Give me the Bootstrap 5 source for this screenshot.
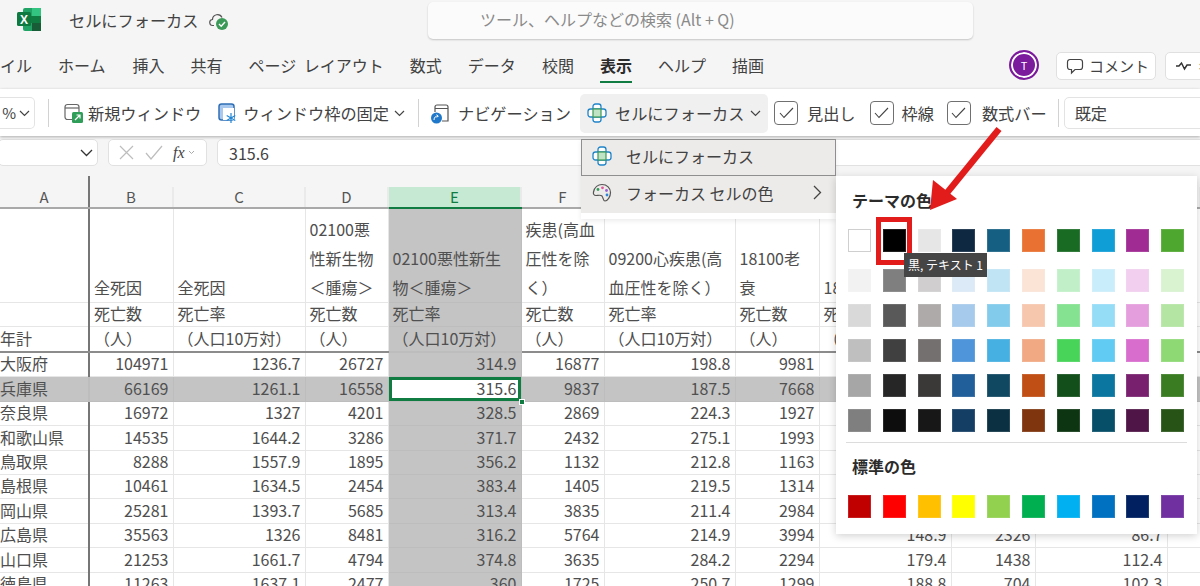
<!DOCTYPE html>
<html lang="ja">
<head>
<meta charset="utf-8">
<title>セルにフォーカス</title>
<link rel="stylesheet" href="https://cdn.jsdelivr.net/npm/bootstrap@5.3.0/dist/css/bootstrap.min.css">
<style>
html,body{margin:0;height:586px;overflow:hidden;background:#fff}
body,.xl-app{font-family:"Noto Sans CJK JP","Noto Sans",sans-serif;font-size:16px;color:#424242}
.xl-app{width:1200px;height:586px;overflow:hidden;position:relative;background:#fff}
.xl-app svg{flex:none}
.xl-title{height:44px;background:#f5f5f5;flex:none;padding-bottom:3px}
.xl-logo{margin-left:17px;margin-bottom:2px}
.xl-doc{margin-left:28px;white-space:nowrap;font-size:16.2px}
.xl-cloud{margin-left:10px}
.xl-search{margin-left:199.500px;width:545px;height:37px;background:#fbfbfb;border-radius:5px;box-shadow:0 1px 2px rgba(0,0,0,.2);padding-left:52px;color:#8a8a8a;line-height:35px;flex:none}
.xl-tabs{height:45px;background:#f5f5f5;flex:none;gap:26px;padding-bottom:3px;white-space:nowrap}
.xl-tabs .xl-tab{position:relative;line-height:42px}
.xl-first{margin-left:-32px}
.xl-home{margin-right:1px}
.xl-pl{word-spacing:4px}
.xl-tab.xl-on{font-weight:700;color:#2b2b2b}
.xl-tab.xl-on::after{content:"";position:absolute;left:0;right:0;bottom:3px;height:2px;background:#107c41}
.xl-avatar{width:30px;height:30px;border-radius:50%;background:#7b1a9c;border:2px solid #7b1a9c;box-shadow:inset 0 0 0 2px #fff;color:#fff;font-size:11px;margin-left:219px;flex:none}
.xl-topbtns{margin-left:-25px;margin-top:2px}
.xl-topbtn{height:28px;background:#fff;border:1px solid #e0e0e0;border-radius:5px;margin-left:16px;width:100px;flex:none;padding-left:9px;gap:5px;font-size:15px;overflow:hidden}
.xl-topbtn.xl-b2{margin-left:9px;width:60px}
.xl-ribbon{height:47px;background:#fff;flex:none;white-space:nowrap;box-shadow:0 1px 3px rgba(0,0,0,.3);position:relative;z-index:2;font-size:16.200px;padding-top:1px}
.xl-zoombox{width:35px;height:32px;border:1px solid #e3e3e3;border-left:0;border-radius:0 5px 5px 0;flex:none;font-size:15px;gap:3px}
.xl-sep{width:1px;height:28px;background:#d2d2d2;flex:none}
.xl-ribbon>span{flex:none}
.xl-focusbtn{width:188px;height:39px;background:#f0f0f0;border-radius:5px;margin-left:9px;padding-left:7px;flex:none}
.xl-check{width:24px;height:24px;border:1px solid #707070;border-radius:4px;flex:none}
.xl-select{width:150px;height:32px;border:1px solid #e3e3e3;border-radius:5px 0 0 5px;padding-left:10px;flex:none;margin-left:5px}
.m5{margin-left:5px}.m6{margin-left:6px}.m8{margin-left:8px}.m9{margin-left:9px}.m10{margin-left:10px}.m11{margin-left:11px}.m12{margin-left:12px}.m13{margin-left:13px}.m14{margin-left:14px}.m15{margin-left:15px}.m17{margin-left:17px}
.xl-fbar{height:36px;background:#f5f5f5;flex:none;padding-top:3px}
.xl-box{background:#fff;border:1px solid #e1e1e1;border-radius:5px;height:27px;flex:none}
.xl-namebox{width:100px;margin-left:-2px;justify-content:flex-end;padding-right:4px}
.xl-fxbox{width:99px;margin-left:10px;padding-left:9px;gap:10px}
.xl-fml{width:990px;margin-left:10px;padding-left:11px;font-size:16px}
.xl-fx{font-family:"Liberation Serif",serif;font-style:italic;font-size:16px;color:#444}
.xl-fxdrop{margin-left:-7px}
.xl-gridgap{height:15px;background:#f5f5f5;flex:none;padding-top:4px}
.xl-gridgap div{width:2px;height:11px;margin-left:88px;background:#767676}
.xl-sheet{table-layout:fixed;width:1200px;border-collapse:collapse;font-size:16px;color:#4e4e4e}
.xl-sheet th{height:21px;background:#f5f5f5;font-weight:400;text-align:center;color:#555;border-bottom:2px solid #a9a9a9;border-right:2px solid #eaeaea;padding:0;line-height:20px;font-size:15px}
.xl-sheet th.xl-acol{background:#c6e9d3;border-bottom-color:#107c41;color:#107c41}
.xl-sheet td{border-right:1px solid #e6e6e6;border-bottom:1px solid #e6e6e6;padding:0 4px 2px;white-space:nowrap;overflow:hidden;line-height:20px}
.xl-sheet .xl-frz{border-right:2px solid #767676;padding-left:0}
.xl-sheet th.xl-frz{border-right-color:#767676}
.xl-sheet td.xl-hd1{height:94px;vertical-align:bottom;white-space:normal;line-height:29px;padding-bottom:0;word-break:break-all}
.xl-sheet .xl-r2 td{height:24px}
.xl-sheet .xl-r3 td{height:26px;border-bottom:2px solid #8c8c8c}
.xl-sheet td.n{text-align:right}
.xl-sheet .xl-gray td,.xl-sheet td.xl-gray{background:#c4c4c4;color:#505050;border-color:#bdbdbd}
.xl-sheet td.xl-cur{background:#fff;box-shadow:inset 0 0 0 3px #107c41,0 0 0 1px #107c41;position:relative;z-index:1;overflow:visible;color:#4e4e4e}
.xl-sheet td.xl-cur::after{content:"";position:absolute;right:-4px;bottom:-4px;width:6px;height:6px;background:#107c41;border:1px solid #fff}
.h24 td{height:24px}.h25 td{height:25px}
.xl-menu.dropdown-menu{display:block;position:absolute;left:581px;top:139px;width:255px;padding:0 0 6px;margin:0;border:0;border-radius:0;background:#fff;font-size:16px;z-index:5;box-shadow:0 2px 5px rgba(0,0,0,.08)}
.xl-mi{height:37px;background:#edebe9;padding:0 0 4px 11px;gap:14px;color:#424242}
.xl-mi.xl-hover{border:1px solid #8f8f8f;padding-left:10px}
.xl-mi .xl-chev{margin-left:auto;margin-right:14px}
.xl-pal{position:absolute;left:836px;top:176px;width:361px;height:358px;background:#fff;z-index:6;box-shadow:0 2px 8px rgba(0,0,0,.18)}
.xl-pal h6{position:absolute;left:16px;margin:0;font-size:16px;font-weight:700;color:#2b2b2b;line-height:22px}
.xl-h1{top:13px}.xl-h2{top:279px}
.xl-swgrid{position:absolute;left:12px;display:grid;grid-template-columns:repeat(10,23px);column-gap:11.800px;row-gap:12px;grid-auto-rows:23px}
.xl-g1{top:53px}.xl-g2{top:93px}.xl-g3{top:319px}
.xl-swgrid i{display:block;box-shadow:inset 0 0 0 1px rgba(255,255,255,.12)}
.xl-swgrid .xl-swwhite{border:1px solid #cfcfcf;box-shadow:none}
.xl-divline{position:absolute;left:10px;right:10px;top:266px;height:1px;background:#dcdcdc}
.xl-redbox{position:absolute;left:40px;top:41px;width:36px;height:48px;border:5px solid #e21b1b;z-index:7}
.xl-tip{position:absolute;left:68px;top:77px;width:83px;height:24px;background:#454545;color:#fff;font-size:12px;line-height:24px;text-align:center;z-index:8;white-space:nowrap}
.xl-arrow{position:absolute;left:0;top:0;z-index:9;pointer-events:none}
</style>
</head>
<body>
<div class="xl-app d-flex flex-column">
  <div class="xl-title d-flex align-items-center">
    <svg class="xl-logo" width="24" height="23" viewBox="0 0 24 23"><rect x="6" y="0" width="18" height="23" rx="2" fill="#21a366"/><rect x="15" y="0" width="9" height="8" fill="#33c481"/><rect x="6" y="8" width="18" height="7" fill="#107c41"/><rect x="15" y="15" width="9" height="8" fill="#185c37"/><rect x="0" y="4" width="14" height="14" rx="1.5" fill="#0e7a40"/><text x="7" y="15.5" text-anchor="middle" font-size="12" font-weight="700" fill="#fff" font-family="Liberation Sans">X</text></svg>
    <span class="xl-doc">セルにフォーカス</span>
    <svg class="xl-cloud" width="20" height="20" viewBox="0 0 20 20"><path d="M5 14.5H4a3 3 0 0 1-.5-6A5 5 0 0 1 13 6.5" fill="none" stroke="#555" stroke-width="1.2"/><circle cx="13" cy="13" r="6" fill="#3c9a58"/><path d="M10 13l2.2 2.2L16 11" fill="none" stroke="#fff" stroke-width="1.4"/></svg>
    <div class="xl-search">ツール、ヘルプなどの検索 (Alt + Q)</div>
  </div>
  <div class="xl-tabs d-flex align-items-center">
    <span class="xl-tab xl-first">ファイル</span><span class="xl-tab xl-home">ホーム</span><span class="xl-tab">挿入</span><span class="xl-tab">共有</span><span class="xl-tab xl-pl">ページ レイアウト</span><span class="xl-tab">数式</span><span class="xl-tab">データ</span><span class="xl-tab">校閲</span><span class="xl-tab xl-on">表示</span><span class="xl-tab">ヘルプ</span><span class="xl-tab">描画</span>
    <div class="xl-avatar d-flex align-items-center justify-content-center">T</div>
    <div class="d-flex xl-topbtns">
      <div class="xl-topbtn d-flex align-items-center"><svg width="18" height="18" viewBox="0 0 18 18"><path d="M4 2.5h10a2.5 2.5 0 0 1 2.5 2.5v5a2.5 2.5 0 0 1-2.5 2.5H9L5.5 16v-3.5H4A2.5 2.5 0 0 1 1.500 10V5A2.500 2.500 0 0 1 4 2.500z" fill="none" stroke="#444" stroke-width="1.200"/></svg>コメント</div>
      <div class="xl-topbtn xl-b2 d-flex align-items-center"><svg width="18" height="12" viewBox="0 0 18 12"><path d="M1 6h3l2.500-3 3 6 2.500-4h4" fill="none" stroke="#333" stroke-width="1.500"/></svg>キャ</div>
    </div>
  </div>
  <div class="xl-ribbon d-flex align-items-center">
    <div class="xl-zoombox d-flex align-items-center justify-content-end pe-1">%<svg width="11" height="7" viewBox="0 0 11 7"><path d="M1 1l4.500 4.500L10 1" fill="none" stroke="#444" stroke-width="1.200"/></svg></div>
    <div class="xl-sep m13"></div>
    <svg class="m15" width="19" height="20" viewBox="0 0 19 20"><rect x="1" y="1.500" width="14" height="15" rx="2.500" fill="none" stroke="#666" stroke-width="1.200"/><path d="M1 5h14" stroke="#666" stroke-width="1.200"/><rect x="8" y="9" width="11" height="11" rx="1.500" fill="#2f9e58"/><path d="M11 17l5-5m-3.500 0H16v3.500" fill="none" stroke="#fff" stroke-width="1.200"/></svg>
    <span class="m5">新規ウィンドウ</span>
    <svg class="m17" width="19" height="21" viewBox="0 0 19 21"><rect x="1" y="1" width="15" height="16" rx="2.500" fill="#a9c8ee" stroke="#2f6fb5" stroke-width="1.500"/><rect x="5" y="5" width="11" height="12" fill="#fff"/><path d="M13 10v10M8.700 12.500l8.600 5M8.700 17.500l8.600-5" stroke="#1f86d6" stroke-width="1.200"/></svg>
    <span class="m6">ウィンドウ枠の固定</span>
    <svg class="m5" width="11" height="7" viewBox="0 0 11 7"><path d="M1 1l4.500 4.500L10 1" fill="none" stroke="#444" stroke-width="1.200"/></svg>
    <div class="xl-sep m13"></div>
    <svg class="m12" width="19" height="21" viewBox="0 0 19 21"><path d="M4 9V4a2 2 0 0 1 2-2h9a2 2 0 0 1 2 2v14h-6M4 5.500h13" fill="none" stroke="#555" stroke-width="1.200"/><circle cx="5.500" cy="15" r="5.500" fill="#1f78c9"/><path d="M3 17c0-3 2-4 4-4m-1.500-1.300L7.300 13l-1.500 1.500" fill="none" stroke="#fff" stroke-width="1"/></svg>
    <span class="m8">ナビゲーション</span>
    <div class="xl-focusbtn d-flex align-items-center">
      <svg width="20" height="20" viewBox="0 0 20 20"><rect x="6" y="1" width="8" height="18" rx="2.500" fill="#fff" stroke="#1f84c9" stroke-width="1.300"/><rect x="1" y="6" width="18" height="8" rx="2.500" fill="#fff" stroke="#1f84c9" stroke-width="1.300"/><rect x="6" y="6" width="8" height="8" fill="#bfe3c4" stroke="#3c9a58" stroke-width="1.200"/></svg>
      <span class="m8">セルにフォーカス</span>
      <svg class="m5" width="11" height="7" viewBox="0 0 11 7"><path d="M1 1l4.500 4.500L10 1" fill="none" stroke="#444" stroke-width="1.200"/></svg>
    </div>
    <div class="xl-check m6 d-flex align-items-center justify-content-center"><svg width="15" height="12" viewBox="0 0 15 12"><path d="M1 6l4 4.500L14 1" fill="none" stroke="#444" stroke-width="1.100"/></svg></div>
    <span class="m9">見出し</span>
    <div class="xl-check m14 d-flex align-items-center justify-content-center"><svg width="15" height="12" viewBox="0 0 15 12"><path d="M1 6l4 4.500L14 1" fill="none" stroke="#444" stroke-width="1.100"/></svg></div>
    <span class="m8">枠線</span>
    <div class="xl-check m13 d-flex align-items-center justify-content-center"><svg width="15" height="12" viewBox="0 0 15 12"><path d="M1 6l4 4.500L14 1" fill="none" stroke="#444" stroke-width="1.100"/></svg></div>
    <span class="m11">数式バー</span>
    <div class="xl-sep m11"></div>
    <div class="xl-select d-flex align-items-center"><span>既定</span></div>
  </div>
  <div class="xl-fbar d-flex">
    <div class="xl-box xl-namebox d-flex align-items-center"><svg width="13" height="8" viewBox="0 0 13 8"><path d="M1 1l5.500 5.500L12 1" fill="none" stroke="#333" stroke-width="1.300"/></svg></div>
    <div class="xl-box xl-fxbox d-flex align-items-center">
      <svg width="17" height="17" viewBox="0 0 17 17"><path d="M2 2l13 13M15 2L2 15" stroke="#bdbdbd" stroke-width="1.200"/></svg>
      <svg width="18" height="15" viewBox="0 0 18 15"><path d="M1 8l5 6L17 1" fill="none" stroke="#bdbdbd" stroke-width="1.200"/></svg>
      <span class="xl-fx">fx</span>
      <svg class="xl-fxdrop" width="7" height="5" viewBox="0 0 7 5"><path d="M1 1l2.500 2.500L6 1" fill="none" stroke="#aaa"/></svg>
    </div>
    <div class="xl-box xl-fml d-flex align-items-center">315.6</div>
  </div>
  <div class="xl-gridgap"><div></div></div>
  <table class="xl-sheet">
    <colgroup><col style="width:89px"><col style="width:84px"><col style="width:132px"><col style="width:83px"><col style="width:133px"><col style="width:83px"><col style="width:131px"><col style="width:84px"><col style="width:132px"><col style="width:84px"><col style="width:132px"><col style="width:33px"></colgroup>
    <thead><tr><th class="xl-frz">A</th><th>B</th><th>C</th><th>D</th><th class="xl-acol">E</th><th>F</th><th>G</th><th>H</th><th>I</th><th>J</th><th>K</th><th>L</th></tr></thead>
    <tbody>
      <tr><td class="xl-hd1 xl-frz"></td><td class="xl-hd1">全死因</td><td class="xl-hd1">全死因</td><td class="xl-hd1">02100悪<br>性新生物<br>＜腫瘍＞</td><td class="xl-hd1 xl-gray">02100悪性新生<br>物＜腫瘍＞</td><td class="xl-hd1">疾患(高血<br>圧性を除<br>く）</td><td class="xl-hd1">09200心疾患(高<br>血圧性を除く）</td><td class="xl-hd1">18100老<br>衰</td><td class="xl-hd1">18</td><td class="xl-hd1"></td><td class="xl-hd1"></td><td class="xl-hd1"></td></tr>
      <tr class="xl-r2"><td class="xl-frz"></td><td>死亡数</td><td>死亡率</td><td>死亡数</td><td class="xl-gray">死亡率</td><td>死亡数</td><td>死亡率</td><td>死亡数</td><td>死亡数</td><td></td><td></td><td></td></tr>
      <tr class="xl-r3"><td class="xl-frz">年計</td><td>（人）</td><td>（人口10万対）</td><td>（人）</td><td class="xl-gray">（人口10万対）</td><td>（人）</td><td>（人口10万対）</td><td>（人）</td><td>（人）</td><td></td><td></td><td></td></tr>
      <tr class="h24"><td class="xl-frz">大阪府</td><td class="n">104971</td><td class="n">1236.7</td><td class="n">26727</td><td class="n xl-gray">314.9</td><td class="n">16877</td><td class="n">198.8</td><td class="n">9981</td><td></td><td></td><td></td><td></td></tr>
      <tr class="h25 xl-gray"><td class="xl-frz">兵庫県</td><td class="n">66169</td><td class="n">1261.1</td><td class="n">16558</td><td class="n xl-cur">315.6</td><td class="n">9837</td><td class="n">187.5</td><td class="n">7668</td><td></td><td></td><td></td><td></td></tr>
      <tr class="h24"><td class="xl-frz">奈良県</td><td class="n">16972</td><td class="n">1327</td><td class="n">4201</td><td class="n xl-gray">328.5</td><td class="n">2869</td><td class="n">224.3</td><td class="n">1927</td><td></td><td></td><td></td><td></td></tr>
      <tr class="h25"><td class="xl-frz">和歌山県</td><td class="n">14535</td><td class="n">1644.2</td><td class="n">3286</td><td class="n xl-gray">371.7</td><td class="n">2432</td><td class="n">275.1</td><td class="n">1993</td><td></td><td></td><td></td><td></td></tr>
      <tr class="h24"><td class="xl-frz">鳥取県</td><td class="n">8288</td><td class="n">1557.9</td><td class="n">1895</td><td class="n xl-gray">356.2</td><td class="n">1132</td><td class="n">212.8</td><td class="n">1163</td><td></td><td></td><td></td><td></td></tr>
      <tr class="h24"><td class="xl-frz">島根県</td><td class="n">10461</td><td class="n">1634.5</td><td class="n">2454</td><td class="n xl-gray">383.4</td><td class="n">1405</td><td class="n">219.5</td><td class="n">1314</td><td></td><td></td><td></td><td></td></tr>
      <tr class="h25"><td class="xl-frz">岡山県</td><td class="n">25281</td><td class="n">1393.7</td><td class="n">5685</td><td class="n xl-gray">313.4</td><td class="n">3835</td><td class="n">211.4</td><td class="n">2984</td><td></td><td></td><td></td><td></td></tr>
      <tr class="h24"><td class="xl-frz">広島県</td><td class="n">35563</td><td class="n">1326</td><td class="n">8481</td><td class="n xl-gray">316.2</td><td class="n">5764</td><td class="n">214.9</td><td class="n">3994</td><td class="n">148.9</td><td class="n">2326</td><td class="n">86.7</td><td></td></tr>
      <tr class="h25"><td class="xl-frz">山口県</td><td class="n">21253</td><td class="n">1661.7</td><td class="n">4794</td><td class="n xl-gray">374.8</td><td class="n">3635</td><td class="n">284.2</td><td class="n">2294</td><td class="n">179.4</td><td class="n">1438</td><td class="n">112.4</td><td></td></tr>
      <tr class="h24"><td class="xl-frz">徳島県</td><td class="n">11263</td><td class="n">1637.1</td><td class="n">2477</td><td class="n xl-gray">360</td><td class="n">1725</td><td class="n">250.7</td><td class="n">1299</td><td class="n">188.8</td><td class="n">704</td><td class="n">102.3</td><td></td></tr>
    </tbody>
  </table>

  <div class="xl-menu dropdown-menu show">
    <div class="xl-mi xl-hover d-flex align-items-center">
      <svg width="20" height="20" viewBox="0 0 20 20"><rect x="6" y="1" width="8" height="18" rx="2.500" fill="#fff" stroke="#1f84c9" stroke-width="1.300"/><rect x="1" y="6" width="18" height="8" rx="2.500" fill="#fff" stroke="#1f84c9" stroke-width="1.300"/><rect x="6" y="6" width="8" height="8" fill="#bfe3c4" stroke="#3c9a58" stroke-width="1.200"/></svg>
      <span>セルにフォーカス</span>
    </div>
    <div class="xl-mi d-flex align-items-center">
      <svg width="20" height="20" viewBox="0 0 20 20"><path d="M10 1.500c5 0 8.500 3.500 8.500 8s-3 8.500-5.500 8.500c-2 0-1.500-3-3-5-1.500-1.500-4-.5-6-.5-2 0-3-1.500-2.500-3.500C2.500 4.500 6 1.500 10 1.500z" fill="none" stroke="#555" stroke-width="1.200"/><circle cx="6" cy="6.500" r="1.400" fill="#2f9e58"/><circle cx="10.500" cy="4.800" r="1.400" fill="#e0559c"/><circle cx="14.500" cy="7.500" r="1.400" fill="#9a5fd0"/><circle cx="15" cy="12" r="1.400" fill="#2f86d6"/></svg>
      <span>フォーカス セルの色</span>
      <svg class="xl-chev" width="9" height="15" viewBox="0 0 9 15"><path d="M1 1l6.500 6.500L1 14" fill="none" stroke="#444" stroke-width="1.300"/></svg>
    </div>
  </div>

  <div class="xl-pal">
    <h6 class="xl-h1">テーマの色</h6>
    <div class="xl-swgrid xl-g1">
      <i class="xl-swwhite" style="background:#fff"></i><i style="background:#000"></i><i style="background:#e7e6e6"></i><i style="background:#0e2841"></i><i style="background:#156082"></i><i style="background:#e97132"></i><i style="background:#196b24"></i><i style="background:#0f9ed5"></i><i style="background:#a02b93"></i><i style="background:#4ea72e"></i>
    </div>
    <div class="xl-swgrid xl-g2">
      <i style="background:#f2f2f2"></i><i style="background:#7f7f7f"></i><i style="background:#d0cece"></i><i style="background:#dce9f7"></i><i style="background:#c1e4f5"></i><i style="background:#fbe3d6"></i><i style="background:#c1f0c8"></i><i style="background:#caedfb"></i><i style="background:#f2cfee"></i><i style="background:#d9f2d0"></i>
      <i style="background:#d9d9d9"></i><i style="background:#595959"></i><i style="background:#aeaaaa"></i><i style="background:#a6caec"></i><i style="background:#83cbeb"></i><i style="background:#f6c6ad"></i><i style="background:#84e291"></i><i style="background:#95dcf7"></i><i style="background:#e59edd"></i><i style="background:#b4e5a2"></i>
      <i style="background:#bfbfbf"></i><i style="background:#404040"></i><i style="background:#757070"></i><i style="background:#4e95d9"></i><i style="background:#45b0e1"></i><i style="background:#f1a983"></i><i style="background:#47d459"></i><i style="background:#61cbf3"></i><i style="background:#d86dcd"></i><i style="background:#8ed973"></i>
      <i style="background:#a6a6a6"></i><i style="background:#262626"></i><i style="background:#3b3838"></i><i style="background:#215f9a"></i><i style="background:#104862"></i><i style="background:#c04f15"></i><i style="background:#124f1a"></i><i style="background:#0b769f"></i><i style="background:#78206e"></i><i style="background:#3a7c22"></i>
      <i style="background:#7f7f7f"></i><i style="background:#0d0d0d"></i><i style="background:#171717"></i><i style="background:#153e64"></i><i style="background:#0a3041"></i><i style="background:#7f350e"></i><i style="background:#0d3512"></i><i style="background:#074f69"></i><i style="background:#4f1547"></i><i style="background:#275317"></i>
    </div>
    <div class="xl-divline"></div>
    <h6 class="xl-h2">標準の色</h6>
    <div class="xl-swgrid xl-g3">
      <i style="background:#c00000"></i><i style="background:#ff0000"></i><i style="background:#ffc000"></i><i style="background:#ffff00"></i><i style="background:#92d050"></i><i style="background:#00b050"></i><i style="background:#00b0f0"></i><i style="background:#0070c0"></i><i style="background:#002060"></i><i style="background:#7030a0"></i>
    </div>
    <div class="xl-redbox"></div>
    <div class="xl-tip">黒, テキスト 1</div>
  </div>

  <svg class="xl-arrow" width="1200" height="586" viewBox="0 0 1200 586"><path d="M999 129L946 194" stroke="#e21b1b" stroke-width="6.500" fill="none"/><polygon points="930,210 933,180 957,199" fill="#e21b1b"/></svg>
</div>
<script src="https://cdn.jsdelivr.net/npm/bootstrap@5.3.0/dist/js/bootstrap.bundle.min.js"></script>
</body>
</html>
